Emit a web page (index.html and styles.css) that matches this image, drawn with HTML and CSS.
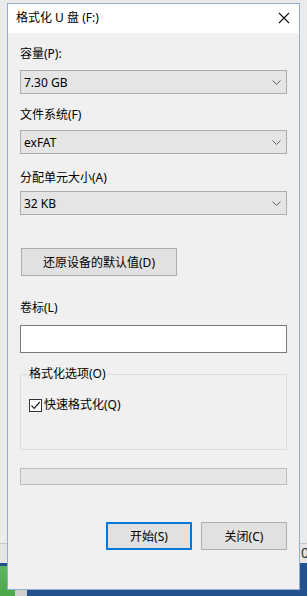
FILE: index.html
```html
<!DOCTYPE html>
<html lang="zh-CN">
<head>
<meta charset="utf-8">
<title>格式化 U 盘 (F:)</title>
<link rel="stylesheet" href="styles.css">
</head>
<body>
<span class="desk-text">0</span>
<div class="window">
  <div class="titlebar">
    <span class="title">格式化 U 盘 (F:)</span>
    <svg class="close" width="12" height="12" viewBox="0 0 12 12"><path d="M1 1 L11 11 M11 1 L1 11" stroke="#111" stroke-width="1.1" fill="none"/></svg>
  </div>
  <div class="content">
    <div class="label l1">容量(P):</div>
    <div class="select s1"><span>7.30 GB</span><svg class="chev" width="9" height="5" viewBox="0 0 9 5"><path d="M0.5 0.5 L4.5 4.5 L8.5 0.5" stroke="#606060" stroke-width="1" fill="none"/></svg></div>
    <div class="label l2">文件系统(F)</div>
    <div class="select s2"><span>exFAT</span><svg class="chev" width="9" height="5" viewBox="0 0 9 5"><path d="M0.5 0.5 L4.5 4.5 L8.5 0.5" stroke="#606060" stroke-width="1" fill="none"/></svg></div>
    <div class="label l3">分配单元大小(A)</div>
    <div class="select s3"><span>32 KB</span><svg class="chev" width="9" height="5" viewBox="0 0 9 5"><path d="M0.5 0.5 L4.5 4.5 L8.5 0.5" stroke="#606060" stroke-width="1" fill="none"/></svg></div>
    <button class="btn restore">还原设备的默认值(D)</button>
    <div class="label l4">卷标(L)</div>
    <div class="textbox"></div>
    <fieldset class="group">
      <legend>格式化选项(O)</legend>
      <div class="group-body">
        <div class="check"><span class="box"><svg width="11" height="11" viewBox="0 0 11 11"><path d="M1.5 5.5 L4.2 8.3 L9.8 2" stroke="#222" stroke-width="1.2" fill="none"/></svg></span><span>快速格式化(Q)</span></div>
      </div>
    </fieldset>
    <div class="progress"></div>
    <div class="actions">
      <button class="btn primary">开始(S)</button>
      <button class="btn">关闭(C)</button>
    </div>
  </div>
</div>
</body>
</html>
```
FILE: styles.css
```css
html, body {
  margin: 0;
  height: 596px;
  overflow: hidden;
}
body {
  position: relative;
  padding: 3px 0 0 7px;
  box-sizing: border-box;
  font-family: "Noto Sans", "Noto Sans CJK SC", sans-serif;
  font-size: 12px;
  color: #000;
  background:
    linear-gradient(#5db55a, #4aa84a) 0 566px / 15px 30px no-repeat,
    linear-gradient(#cfcfcf, #cfcfcf) 15px 590px / 12px 6px no-repeat,
    linear-gradient(to bottom, #ebebeb 0 543px, #c8c8c8 543px 544px, #e6e6e6 544px 563px, #24528f 563px);
}
.desk-text {
  position: absolute;
  left: 301px;
  top: 543px;
  font-size: 14px;
  color: #333;
}
.window {
  position: relative;
  width: 293px;
  height: 587px;
  border: 1px solid #8fb0d2;
  box-sizing: border-box;
  background: #f0f0f0;
  display: flex;
  flex-direction: column;
}
.titlebar {
  height: 29px;
  background: #fff;
  display: flex;
  align-items: center;
  justify-content: space-between;
  padding: 0 9px 2px 8px;
  box-sizing: border-box;
  flex: none;
}
.title {
  font-size: 12px;
  line-height: 16px;
}
.close {
  display: block;
}
.content {
  padding: 0 12px;
  display: flex;
  flex-direction: column;
}
.label {
  line-height: 16px;
  height: 16px;
  white-space: nowrap;
}
.l1 { margin-top: 13px; }
.l2 { margin-top: 13px; }
.l3 { margin-top: 16px; }
.l4 { margin-top: 24px; }
.select {
  height: 24px;
  border: 1px solid #adadad;
  background: #e5e5e5;
  box-sizing: border-box;
  display: flex;
  align-items: center;
  justify-content: space-between;
  padding: 0 5px 0 3px;
}
.s1 { margin-top: 8px; }
.s2 { margin-top: 7px; }
.s3 { margin-top: 5px; }
.chev { display: block; }
.btn {
  font: inherit;
  color: #000;
  height: 28px;
  border: 1px solid #adadad;
  background: #e1e1e1;
  box-sizing: border-box;
  padding: 0;
  margin: 0;
}
.restore {
  width: 156px;
  margin-top: 33px;
  margin-left: 1px;
  align-self: flex-start;
}
.textbox {
  height: 28px;
  margin-top: 9px;
  border: 1px solid #7a7a7a;
  background: #fff;
  box-sizing: border-box;
}
.group {
  margin: 13px 0 0;
  padding: 0;
  border: 1px solid #dcdcdc;
  min-width: 0;
}
.group legend {
  margin-left: 7px;
  padding: 0 1px;
  line-height: 16px;
}
.group-body {
  height: 67px;
  box-sizing: border-box;
  padding: 15px 0 0 8px;
}
.check {
  display: flex;
  align-items: center;
  gap: 2px;
  line-height: 16px;
}
.box {
  width: 13px;
  height: 13px;
  border: 1px solid #333;
  box-sizing: border-box;
  background: #fff;
  display: flex;
  align-items: center;
  justify-content: center;
}
.box svg { display: block; }
.progress {
  height: 17px;
  margin-top: 18px;
  border: 1px solid #bcbcbc;
  background: #e6e6e6;
  box-sizing: border-box;
}
.actions {
  margin-top: 37px;
  display: flex;
  justify-content: flex-end;
  gap: 9px;
}
.actions .btn {
  width: 86px;
}
.primary {
  border: 2px solid #0078d7;
}
```
